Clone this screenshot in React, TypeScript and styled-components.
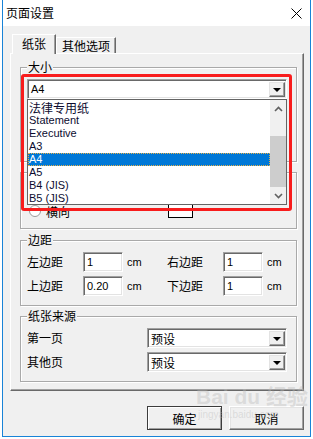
import React from "react";
import styled, { createGlobalStyle } from "styled-components";

const CJK = `"Noto Sans CJK SC", "Liberation Sans", sans-serif`;
const LAT = `"Liberation Sans", "Noto Sans CJK SC", sans-serif`;

const GlobalStyle = createGlobalStyle`
  html, body { margin: 0; padding: 0; background: #fff; }
  body { width: 313px; height: 439px; overflow: hidden; font-family: ${CJK}; font-size: 12px; color: #000; }
  * { box-sizing: border-box; }
`;

const Page = styled.div`
  position: relative;
  width: 313px;
  height: 439px;
  padding-left: 2px;
`;

const Window = styled.div`
  width: 309px;
  height: 437px;
  border: 1px solid #1883d7;
  border-top: none;
  background: #f0f0f0;
  display: flex;
  flex-direction: column;
`;

const TitleBar = styled.div`
  height: 26px;
  flex: none;
  background: #fff;
  display: flex;
  align-items: center;
  justify-content: space-between;
  padding: 0 8px 0 3px;
  font-family: ${CJK};
  font-size: 12px;
  line-height: 14px;
`;

const Body = styled.div`
  padding: 8px 6px 0 7px;
  display: flex;
  flex-direction: column;
`;

const TabStrip = styled.div`
  height: 19px;
  display: flex;
  align-items: flex-end;
  padding-left: 2px;
`;

const Tab = styled.div<{ $active?: boolean; $w: number }>`
  position: relative;
  z-index: ${(p) => (p.$active ? 2 : 1)};
  width: ${(p) => p.$w}px;
  height: ${(p) => (p.$active ? 20 : 16)}px;
  margin-bottom: ${(p) => (p.$active ? -1 : 0)}px;
  background: #f0f0f0;
  border-top: 1px solid #fff;
  border-left: 1px solid #fff;
  border-right: 1px solid #696969;
  box-shadow: inset -1px 0 0 #a0a0a0;
  display: flex;
  align-items: center;
  justify-content: center;
  font-family: ${CJK};
  font-size: 12px;
  line-height: 14px;
  padding-bottom: ${(p) => (p.$active ? 2 : 0)}px;
`;

const Panel = styled.div`
  height: 338px;
  border: 1px solid;
  border-color: #fff #696969 #696969 #fff;
  box-shadow: inset -1px -1px 0 #a0a0a0;
  padding: 13px 6px 0 9px;
  display: flex;
  flex-direction: column;
`;

const Group = styled.div<{ $h: number; $mt?: number }>`
  position: relative;
  height: ${(p) => p.$h}px;
  margin-top: ${(p) => p.$mt ?? 0}px;
  border: 1px solid #a9a9a9;
  box-shadow: inset 1px 1px 0 #fff, 1px 1px 0 #fff;
`;

const Legend = styled.span`
  position: absolute;
  top: -8px;
  left: 6px;
  padding: 0 1px;
  background: #f0f0f0;
  font-family: ${CJK};
  font-size: 12px;
  line-height: 14px;
`;

const SizeBody = styled.div`
  padding: 11px 0 0 6px;
`;

const SizeAnchor = styled.div`
  position: relative;
  width: 260px;
`;

const Field = styled.div<{ $w: number }>`
  position: relative;
  width: ${(p) => p.$w}px;
  height: 20px;
  background: #fff;
  border: 1px solid;
  border-color: #a0a0a0 #fff #fff #a0a0a0;
  box-shadow: inset 1px 1px 0 #696969, inset -1px -1px 0 #e3e3e3;
  display: flex;
  align-items: center;
  padding-left: 3px;
  font-family: ${LAT};
  font-size: 11px;
  line-height: 13px;
`;

const FieldText = styled.span<{ $cjk?: boolean }>`
  font-family: ${(p) => (p.$cjk ? CJK : LAT)};
  font-size: ${(p) => (p.$cjk ? 12 : 11)}px;
`;

const DropBtn = styled.div`
  position: absolute;
  right: 1px;
  top: 2px;
  width: 16px;
  height: 15px;
  background: #f0f0f0;
  border: 1px solid;
  border-color: #e3e3e3 #696969 #696969 #e3e3e3;
  box-shadow: inset -1px -1px 0 #a0a0a0;
  display: flex;
  align-items: center;
  justify-content: center;
`;

const Tri = styled.div`
  width: 0;
  height: 0;
  border-left: 4px solid transparent;
  border-right: 4px solid transparent;
  border-top: 4px solid #000;
`;

const DropList = styled.div`
  position: absolute;
  z-index: 5;
  top: 20px;
  left: 0;
  width: 260px;
  height: 106px;
  background: #fff;
  border: 1px solid #646464;
  display: flex;
`;

const Items = styled.div`
  width: 242px;
  overflow: hidden;
  display: flex;
  flex-direction: column;
`;

const Item = styled.div<{ $sel?: boolean; $cjk?: boolean }>`
  flex: none;
  height: ${(p) => (p.$cjk ? 14 : 13)}px;
  display: flex;
  align-items: center;
  padding-left: 1px;
  font-family: ${(p) => (p.$cjk ? CJK : LAT)};
  font-size: ${(p) => (p.$cjk ? 12 : 11)}px;
  line-height: 13px;
  color: ${(p) => (p.$sel ? "#fff" : "#0c0c30")};
  background: ${(p) => (p.$sel ? "#0078d7" : "transparent")};
  outline: ${(p) => (p.$sel ? "1px dotted #e8b048" : "none")};
  outline-offset: -1px;
`;

const ScrollBar = styled.div`
  width: 16px;
  background: #f0f0f0;
  display: flex;
  flex-direction: column;
`;

const ScrollBtn = styled.div`
  height: 17px;
  display: flex;
  align-items: center;
  justify-content: center;
`;

const Track = styled.div`
  flex: 1;
  display: flex;
  flex-direction: column;
  justify-content: flex-end;
`;

const Thumb = styled.div`
  height: 51px;
  background: #cdcdcd;
`;

const RedFrame = styled.div`
  position: absolute;
  z-index: 6;
  top: -5px;
  left: -6px;
  width: 271px;
  height: 137px;
  border: 3px solid #f81c1c;
  border-radius: 3px;
  pointer-events: none;
`;

const OrientBody = styled.div`
  display: grid;
  grid-template-columns: 139px 25px;
  align-items: end;
  padding: 11px 0 0 8px;
`;

const RadioCol = styled.div`
  display: flex;
  flex-direction: column;
  gap: 6px;
`;

const RadioRow = styled.div`
  height: 14px;
  display: flex;
  align-items: center;
  gap: 5px;
  font-family: ${CJK};
  font-size: 12px;
`;

const RadioDot = styled.span`
  width: 12px;
  height: 12px;
  border-radius: 50%;
  background: #fff;
  border: 1px solid #9a9a9a;
`;

const PageIcon = styled.div`
  width: 25px;
  height: 20px;
  background: #fff;
  border: 1px solid #000;
`;

const MarginGrid = styled.div`
  display: grid;
  grid-template-columns: 56px 40px 44px 56px 40px auto;
  grid-auto-rows: 20px;
  row-gap: 4px;
  align-items: center;
  padding: 11px 0 0 6px;
`;

const Label = styled.span`
  font-family: ${CJK};
  font-size: 12px;
  line-height: 14px;
`;

const Unit = styled.span`
  padding-left: 4px;
  font-family: ${LAT};
  font-size: 11px;
`;

const SourceGrid = styled.div`
  display: grid;
  grid-template-columns: 120px 140px;
  grid-auto-rows: 20px;
  row-gap: 4px;
  align-items: center;
  padding: 11px 0 0 6px;
`;

const ButtonRow = styled.div`
  margin-top: 15px;
  display: flex;
  justify-content: flex-end;
  gap: 7px;
`;

const Button = styled.div<{ $default?: boolean }>`
  width: 75px;
  height: 24px;
  background: #f0f0f0;
  border: 1px solid;
  border-color: ${(p) => (p.$default ? "#3c3c3c" : "#fff #696969 #696969 #fff")};
  box-shadow: ${(p) =>
    p.$default
      ? "inset 1px 1px 0 #fff, inset -1px -1px 0 #a0a0a0"
      : "inset -1px -1px 0 #a0a0a0, inset 1px 1px 0 #e3e3e3"};
  display: flex;
  align-items: center;
  justify-content: center;
  font-family: ${CJK};
  font-size: 12px;
`;

const Watermark = styled.div`
  position: absolute;
  left: 196px;
  top: 385px;
  z-index: 10;
  pointer-events: none;
  display: flex;
  flex-direction: column;
  align-items: flex-start;
  color: rgba(185, 185, 185, 0.4);
  font-family: ${LAT};
`;

const WmBig = styled.span`
  font-size: 21px;
  font-weight: bold;
  line-height: 24px;
`;

const WmSmall = styled.span`
  font-size: 10px;
  line-height: 11px;
  padding-left: 2px;
`;

function Select({ w, text, cjk }: { w: number; text: string; cjk?: boolean }) {
  return (
    <Field $w={w}>
      <FieldText $cjk={cjk}>{text}</FieldText>
      <DropBtn>
        <Tri />
      </DropBtn>
    </Field>
  );
}

const Chevron = ({ up }: { up?: boolean }) => (
  <svg width="9" height="6" viewBox="0 0 9 6">
    <polyline
      points={up ? "1,5 4.5,1.5 8,5" : "1,1 4.5,4.5 8,1"}
      fill="none"
      stroke="#606060"
      strokeWidth="1.6"
    />
  </svg>
);

const sizes: { t: string; cjk?: boolean; sel?: boolean }[] = [
  { t: "法律专用纸", cjk: true },
  { t: "Statement" },
  { t: "Executive" },
  { t: "A3" },
  { t: "A4", sel: true },
  { t: "A5" },
  { t: "B4 (JIS)" },
  { t: "B5 (JIS)" },
];

export default function App() {
  return (
    <>
      <GlobalStyle />
      <Page>
        <Window>
          <TitleBar>
            <span>页面设置</span>
            <svg width="11" height="11" viewBox="0 0 11 11">
              <path d="M0.5 0.5 L10.5 10.5 M10.5 0.5 L0.5 10.5" stroke="#000" strokeWidth="1" />
            </svg>
          </TitleBar>
          <Body>
            <TabStrip>
              <Tab $active $w={44}>纸张</Tab>
              <Tab $w={60}>其他选项</Tab>
            </TabStrip>
            <Panel>
              <Group $h={95}>
                <Legend>大小</Legend>
                <SizeBody>
                  <SizeAnchor>
                    <Select w={260} text="A4" />
                    <DropList>
                      <Items>
                        {sizes.map((s) => (
                          <Item key={s.t} $sel={s.sel} $cjk={s.cjk}>
                            {s.t}
                          </Item>
                        ))}
                      </Items>
                      <ScrollBar>
                        <ScrollBtn>
                          <Chevron up />
                        </ScrollBtn>
                        <Track>
                          <Thumb />
                        </Track>
                        <ScrollBtn>
                          <Chevron />
                        </ScrollBtn>
                      </ScrollBar>
                    </DropList>
                    <RedFrame />
                  </SizeAnchor>
                </SizeBody>
              </Group>

              <Group $h={57} $mt={10}>
                <OrientBody>
                  <RadioCol>
                    <RadioRow>
                      <RadioDot />
                    </RadioRow>
                    <RadioRow>
                      <RadioDot />
                      横向
                    </RadioRow>
                  </RadioCol>
                  <PageIcon />
                </OrientBody>
              </Group>

              <Group $h={66} $mt={11}>
                <Legend>边距</Legend>
                <MarginGrid>
                  <Label>左边距</Label>
                  <Field $w={40}>1</Field>
                  <Unit>cm</Unit>
                  <Label>右边距</Label>
                  <Field $w={40}>1</Field>
                  <Unit>cm</Unit>
                  <Label>上边距</Label>
                  <Field $w={40}>0.20</Field>
                  <Unit>cm</Unit>
                  <Label>下边距</Label>
                  <Field $w={40}>1</Field>
                  <Unit>cm</Unit>
                </MarginGrid>
              </Group>

              <Group $h={66} $mt={10}>
                <Legend>纸张来源</Legend>
                <SourceGrid>
                  <Label>第一页</Label>
                  <Select w={140} text="预设" cjk />
                  <Label>其他页</Label>
                  <Select w={140} text="预设" cjk />
                </SourceGrid>
              </Group>
            </Panel>
            <ButtonRow>
              <Button $default>确定</Button>
              <Button>取消</Button>
            </ButtonRow>
          </Body>
        </Window>
        <Watermark>
          <WmBig>Bai du 经验</WmBig>
          <WmSmall>jingyan.baidu.com</WmSmall>
        </Watermark>
      </Page>
    </>
  );
}
